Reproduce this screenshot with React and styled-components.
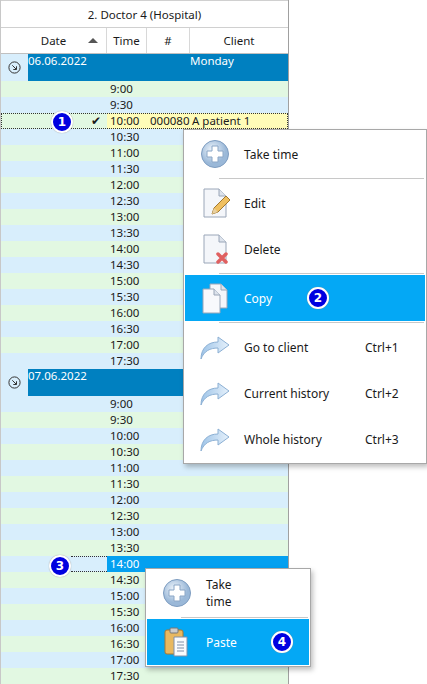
import React from "react";
import styled, { createGlobalStyle } from "styled-components";

const Global = createGlobalStyle`
  body { margin: 0; font-family: "Noto Sans", "Liberation Sans", sans-serif; font-size: 12px; color: #1a1a1a; background: #fff; }
`;
const Page = styled.div`position: relative; width: 427px; height: 684px; overflow: hidden;`;
const Grid = styled.div`width: 287px; border-right: 1px solid #a0a0a0; border-left: 1px solid #c8c8c8;`;
const Title = styled.div`height: 26px; display: flex; align-items: center; justify-content: center; border-bottom: 1px solid #d0d0d0; border-top: 1px solid #d0d0d0; font-size: 11.5px;`;
const HeadRow = styled.div`display: grid; grid-template-columns: 106px 40px 43px 98px; height: 25px; border-bottom: 1px solid #c0c0c0;`;
const HeadCell = styled.div`display: flex; align-items: center; justify-content: center; border-right: 1px solid #d8d8d8; font-size: 11.5px; position: relative; &:last-child{border-right:none;}`;
const Sort = styled.span`position: absolute; right: 8px; top: 10px; width: 0; height: 0; border-left: 5px solid transparent; border-right: 5px solid transparent; border-bottom: 5px solid #555;`;
const GroupRow = styled.div`display: flex; height: 27px; background: #d8eefc;`;
const GroupGutter = styled.div`width: 27px; display: flex; align-items: center; justify-content: center;`;
const GroupBar = styled.div`flex: 1; background: #0080c0; color: #fff; display: grid; grid-template-columns: 162px 1fr; font-size: 11.5px; line-height: 14px;`;
const Row = styled.div`display: grid; grid-template-columns: 106px 40px 43px 98px; height: 16px; line-height: 16px; font-size: 11.5px; background: ${p => p.$bg};`;
const Cell = styled.div`white-space: nowrap; padding-left: ${p => p.$pl || 0}px; background: ${p => p.$bg || "transparent"}; color: ${p => p.$c || "inherit"}; text-align: ${p => p.$al || "left"}; padding-right: ${p => p.$pr || 0}px;`;
const Menu = styled.div`position: absolute; left: ${p => p.$x}px; top: ${p => p.$y}px; width: ${p => p.$w}px; background: #fff; border: 1px solid #a8a8a8; box-shadow: 2px 3px 5px rgba(0,0,0,0.25); padding: 1px 0;`;
const Item = styled.div`height: ${p => p.$h || 46}px; display: grid; grid-template-columns: 59px 1fr 60px; align-items: center; margin: 0 1px; background: ${p => (p.$hl ? "#04a8f5" : "transparent")}; color: ${p => (p.$hl ? "#fff" : "#1a1a1a")}; font-size: 12px; position: relative;`;
const IconBox = styled.div`display: flex; justify-content: center; align-items: center;`;
const Sep = styled.div`height: 1px; background: #c8c8c8; margin: 1px 2px 1px 35px;`;
const Badge = styled.div`position: absolute; left: ${p => p.$x}px; top: ${p => p.$y}px; width: 18px; height: 18px; border-radius: 50%; background: #0000e0; border: 2px solid #fff; box-shadow: 0 0 1px #888; color: #fff; font-weight: bold; font-size: 12px; display: flex; align-items: center; justify-content: center; font-family: "DejaVu Sans", sans-serif;`;

const Plus = () => (
  <svg width="30" height="30" viewBox="0 0 30 30"><defs><radialGradient id="pg" cx="40%" cy="35%"><stop offset="0" stopColor="#f0f6fc"/><stop offset="1" stopColor="#9ab8d8"/></radialGradient></defs>
    <circle cx="15" cy="15" r="13.5" fill="url(#pg)" stroke="#7d9cc0"/>
    <path d="M12 7h6v5h5v6h-5v5h-6v-5H7v-6h5z" fill="#fff" stroke="#8aa6c6"/></svg>
);
const Doc = ({ children }) => (
  <svg width="30" height="32" viewBox="0 0 30 32"><path d="M4 2h15l7 7v21H4z" fill="#f4f6fa" stroke="#9aa6b8"/><path d="M19 2v7h7" fill="#dde3ec" stroke="#9aa6b8"/>{children}</svg>
);
const EditIcon = () => <Doc><path d="M12 27l2-6 12-12 4 4-12 12z" fill="#f0c060" stroke="#a07830"/><path d="M12 27l2-6 4 4z" fill="#e8d0a0"/></Doc>;
const DelIcon = () => <Doc><path d="M18 21l8 8M26 21l-8 8" stroke="#e06060" strokeWidth="3.5" strokeLinecap="round"/></Doc>;
const CopyIcon = () => (
  <svg width="30" height="32" viewBox="0 0 30 32"><path d="M10 2h11l6 6v18H10z" fill="#f4f6fa" stroke="#9aa6b8"/><path d="M21 2v6h6" fill="#dde3ec" stroke="#9aa6b8"/>
    <path d="M3 7h11l6 6v18H3z" fill="#f8f9fc" stroke="#9aa6b8"/><path d="M14 7v6h6" fill="#dde3ec" stroke="#9aa6b8"/></svg>
);
const Arrow = () => (
  <svg width="32" height="26" viewBox="0 0 32 26"><defs><linearGradient id="ag" x1="0" x2="1"><stop offset="0" stopColor="#9ec4e8"/><stop offset="1" stopColor="#e6f1fb"/></linearGradient></defs>
    <path d="M2 25C2 14 9 8 19 8V3l11 8-11 8v-5C11 14 5 17 2 25z" fill="url(#ag)" stroke="#8cb0d4"/></svg>
);
const Clip = () => (
  <svg width="30" height="32" viewBox="0 0 30 32"><rect x="3" y="4" width="18" height="24" rx="2" fill="#e8b860" stroke="#a87830"/><rect x="8" y="2" width="8" height="5" rx="1" fill="#ccc" stroke="#777"/>
    <path d="M12 11h13v19H12z" fill="#fafbfd" stroke="#8090a8"/><path d="M15 16h7M15 19h7M15 22h7M15 25h7" stroke="#8090a8"/></svg>
);
const Collapse = () => (
  <svg width="13" height="13" viewBox="0 0 13 13"><circle cx="6.5" cy="6.5" r="5.6" fill="none" stroke="#333"/><path d="M4.3 4.3l4 4M8.5 5.3v3.2H5.3" fill="none" stroke="#333"/></svg>
);

const times = ["9:00","9:30","10:00","10:30","11:00","11:30","12:00","12:30","13:00","13:30","14:00","14:30","15:00","15:30","16:00","16:30","17:00","17:30"];
const G = "#e2f8e2", B = "#d8eefc";

function Group({ date, day, startGreen, special }) {
  return (
    <>
      <GroupRow>
        <GroupGutter><Collapse /></GroupGutter>
        <GroupBar><span>{date}</span><span>{day}</span></GroupBar>
      </GroupRow>
      {times.map((t, i) => {
        const green = (i % 2 === 0) === startGreen;
        const s = special[t];
        if (s === "yellow")
          return (
            <Row key={t} $bg={green ? G : B} style={{ outline: "1px dotted #333", outlineOffset: "-1px" }}>
              <Cell $al="right" $pr={6}>✔</Cell>
              <Cell $pl={3} $bg="#fffcb8">{t}</Cell>
              <Cell $pl={3} $bg="#fffcb8">000080</Cell>
              <Cell $pl={2} $bg="#fffcb8">A patient 1</Cell>
            </Row>
          );
        if (s === "sel")
          return (
            <Row key={t} $bg={green ? G : B}>
              <Cell style={{ borderTop: "1px dotted #333", borderBottom: "1px dotted #333", marginLeft: 70 }} />
              <Cell $pl={3} $bg="#04a0f0" $c="#fff">{t}</Cell>
              <Cell $bg="#04a0f0" />
              <Cell $bg="#04a0f0" />
            </Row>
          );
        return (
          <Row key={t} $bg={green ? G : B}>
            <Cell /><Cell $pl={3}>{t}</Cell><Cell /><Cell />
          </Row>
        );
      })}
    </>
  );
}

export default function App() {
  return (
    <Page>
      <Global />
      <Grid>
        <Title>2. Doctor 4 (Hospital)</Title>
        <HeadRow>
          <HeadCell>Date<Sort /></HeadCell>
          <HeadCell>Time</HeadCell>
          <HeadCell>#</HeadCell>
          <HeadCell>Client</HeadCell>
        </HeadRow>
        <Group date="06.06.2022" day="Monday" startGreen special={{ "10:00": "yellow" }} />
        <Group date="07.06.2022" day="" startGreen={false} special={{ "14:00": "sel" }} />
      </Grid>
      <Badge $x={51} $y={111}>1</Badge>
      <Badge $x={49} $y={555}>3</Badge>

      <Menu $x={183} $y={129} $w={242}>
        <Item><IconBox><Plus /></IconBox><span>Take time</span><span /></Item>
        <Sep />
        <Item><IconBox><EditIcon /></IconBox><span>Edit</span><span /></Item>
        <Item><IconBox><DelIcon /></IconBox><span>Delete</span><span /></Item>
        <Sep />
        <Item $hl><IconBox><CopyIcon /></IconBox><span>Copy</span><span /><Badge $x={122} $y={12}>2</Badge></Item>
        <Sep />
        <Item><IconBox><Arrow /></IconBox><span>Go to client</span><span>Ctrl+1</span></Item>
        <Item><IconBox><Arrow /></IconBox><span>Current history</span><span>Ctrl+2</span></Item>
        <Item><IconBox><Arrow /></IconBox><span>Whole history</span><span>Ctrl+3</span></Item>
      </Menu>

      <Menu $x={145} $y={568} $w={164}>
        <Item><IconBox><Plus /></IconBox><span>Take time</span><span /></Item>
        <Sep />
        <Item $hl><IconBox><Clip /></IconBox><span>Paste</span><span /><Badge $x={124} $y={12}>4</Badge></Item>
      </Menu>
    </Page>
  );
}
